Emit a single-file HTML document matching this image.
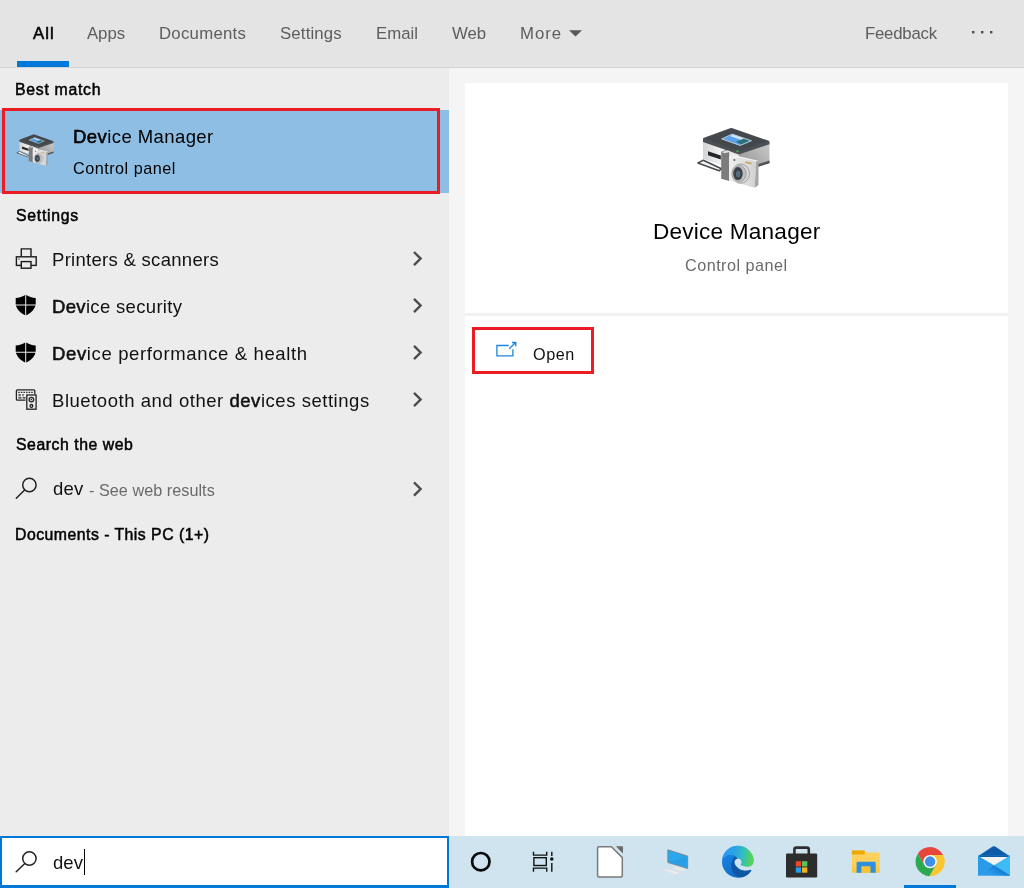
<!DOCTYPE html>
<html lang="en"><head><meta charset="utf-8"><title>Search</title><style>
*{margin:0;padding:0;box-sizing:border-box}
html,body{width:1024px;height:888px;overflow:hidden;background:#f5f5f5;font-family:"Liberation Sans",sans-serif}
.a{position:absolute}
.t{position:absolute;white-space:nowrap;line-height:1;will-change:transform}
.t b{font-weight:normal;-webkit-text-stroke:0.55px currentColor}
</style></head><body>
<div class="a" id="hdr" style="left:0;top:0;width:1024px;height:67px;background:#e4e4e4"></div>
<div class="a" style="left:0;top:67px;width:1024px;height:1px;background:#d4d4d4"></div>
<div class="a" id="left" style="left:0;top:68px;width:449px;height:768px;background:#ececec"></div>
<div class="a" id="card" style="left:465px;top:83px;width:543px;height:753px;background:#fff"></div>
<div class="a" style="left:465px;top:313px;width:543px;height:3px;background:#f1f1f1"></div>
<div class="a" style="left:17px;top:61px;width:52px;height:6px;background:#0078d7"></div>
<div class="a" style="left:0;top:110px;width:449px;height:83px;background:#8fbee5"></div>
<div class="a" style="left:2px;top:108px;width:438px;height:86px;border:3px solid #ec1c24"></div>
<div class="a" style="left:472px;top:327px;width:122px;height:47px;border:3px solid #ec1c24"></div>
<div class="a" style="left:0;top:836px;width:1024px;height:52px;background:#cfe4ef"></div>
<div class="a" style="left:0;top:836px;width:449px;height:52px;background:#fff;border:solid #0078d7;border-width:2px 2px 3px 2px"></div>
<div class="a" style="left:84px;top:849px;width:1px;height:26px;background:#000"></div>
<div class="a" style="left:904px;top:885px;width:52px;height:3px;background:#0078d7"></div>
<svg class="a" style="left:0;top:0" width="1024" height="888" viewBox="0 0 1024 888">
<defs>
<g id="devmgr">
  <!-- page coords, large version -->
  <polygon points="697.9,163 703.4,160.2 721.4,168.8 719,170.8" fill="#f4f4f4" stroke="#474c50" stroke-width="1.5" stroke-linejoin="round"/>
  <path d="M703,141 L738.8,153.5 L738.8,171 L703.6,159 a1,1 0 0 1 -0.6,-1 Z" fill="url(#dmL)"/>
  <path d="M738.8,153.5 L769.5,143.5 L769.5,163 L738.8,173 Z" fill="url(#dmR)"/>
  <path d="M738.8,170.4 L769.5,160.6 L769.5,163.2 L738.8,173 Z" fill="#4d5256"/>
  <path d="M704,137.8 L730,128.2 a3.5,3.5 0 0 1 2.6,0 L768.2,140.6 a1.6,1.6 0 0 1 1.3,1.6 V144.2 L738.8,154.6 L703,142 V139.4 a1.6,1.6 0 0 1 1,-1.6 Z" fill="#4b5055"/>
  <path d="M704.2,138.6 L731.3,128.8 L768.4,141.4 L738.8,151.2 Z" fill="#43484d"/>
  <polygon points="708,151.2 720.8,155.4 720.8,159.6 708,155.2" fill="#23272a"/>
  <polygon points="721.6,138.9 732.2,134.1 751.5,140.7 740.1,145.5" fill="#5aa0ea"/>
  <polygon points="730,136 733,134.8 746,139.2 742.6,140.6" fill="#cfe6fb"/>
  <polygon points="736,141.8 744,138.6 750,140.8 741,144.4" fill="#2f6f7a"/>
  <polygon points="721.6,138.9 732.2,134.1 751.5,140.7 740.1,145.5" fill="none" stroke="#dfe6ea" stroke-width="0.7"/>
  <circle cx="737.5" cy="151.3" r="1.1" fill="#35c24a"/>
  <path d="M721.2,152.6 a1.6,1.6 0 0 1 1.2,-1.5 L727.4,150 a1.6,1.6 0 0 1 1.8,1.4 V181 L721.2,178.8 Z" fill="#7c7c7c"/>
  <path d="M721.4,152 L727.6,150.4 L731,151.4 L725,153.2 Z" fill="#e0e0e0"/>
  <polygon points="729.1,156.5 756.3,161.3 754.6,187.7 729.1,180.6" fill="url(#dmC)"/>
  <polygon points="756.3,161.3 758.5,160.9 758.5,185 754.6,187.7" fill="#a6a6a6"/>
  <polygon points="729.1,156.5 732.2,154.8 758.5,160.7 756.3,161.5" fill="#f2f2f2"/>
  <ellipse cx="740.7" cy="173.6" rx="8.8" ry="9.7" fill="#d9d9d9" stroke="#9a9a9a" stroke-width="0.9"/>
  <ellipse cx="739.6" cy="173.6" rx="6.6" ry="8" fill="#bdbdbd" stroke="#8c8c8c" stroke-width="0.7"/>
  <ellipse cx="738" cy="173.6" rx="4.7" ry="6.5" fill="#3a4248"/>
  <ellipse cx="738.2" cy="174" rx="2.2" ry="3.2" fill="#54707f"/>
  <circle cx="734.4" cy="160" r="1" fill="#555"/>
  <polygon points="745.4,161.6 751.5,162.8 751.5,164.2 745.4,163" fill="#c2a24a"/>
</g>
<linearGradient id="dmL" x1="0" y1="0" x2="1" y2="0"><stop offset="0" stop-color="#d4d4d4"/><stop offset="0.5" stop-color="#f2f2f2"/><stop offset="1" stop-color="#e2e2e2"/></linearGradient>
<linearGradient id="dmR" x1="0" y1="1" x2="1" y2="0"><stop offset="0" stop-color="#8e8e8e"/><stop offset="1" stop-color="#c9c9c9"/></linearGradient>
<linearGradient id="dmC" x1="0" y1="0" x2="1" y2="0"><stop offset="0" stop-color="#efefef"/><stop offset="1" stop-color="#d2d2d2"/></linearGradient>
<g id="shield">
  <path d="M10,0 C7,2.1 3.5,3 0,3.2 L0,9.6 L9.5,9.6 L9.5,0.35 Z" />
  <path d="M10,0 C13,2.1 16.5,3 20,3.2 L20,9.6 L10.5,9.6 L10.5,0.35 Z" />
  <path d="M0.2,10.6 L9.5,10.6 L9.5,20.4 C5.2,18.4 1.4,15 0.2,10.6 Z"/>
  <path d="M19.8,10.6 L10.5,10.6 L10.5,20.4 C14.8,18.4 18.6,15 19.8,10.6 Z"/>
</g>
<g id="chev" fill="none" stroke="#4d4d4d" stroke-width="2.4" stroke-linecap="butt" stroke-linejoin="miter">
  <path d="M0.4,-6.6 L7,0 L0.4,6.6"/>
</g>
<linearGradient id="edgeg" x1="0" y1="1" x2="1" y2="0">
  <stop offset="0" stop-color="#0c59a4"/><stop offset="0.45" stop-color="#1b86d6"/><stop offset="0.75" stop-color="#35c1b0"/><stop offset="1" stop-color="#5fd15a"/>
</linearGradient>
<linearGradient id="edgeA" gradientUnits="userSpaceOnUse" x1="-16" y1="-4" x2="16" y2="0">
  <stop offset="0" stop-color="#2b98f2"/><stop offset="0.4" stop-color="#2aa6e2"/><stop offset="0.68" stop-color="#34c2b4"/><stop offset="0.84" stop-color="#4fcd6c"/><stop offset="1" stop-color="#60d45a"/>
</linearGradient>
<linearGradient id="edgeB" gradientUnits="userSpaceOnUse" x1="-8" y1="-10" x2="2" y2="16">
  <stop offset="0" stop-color="#1a82df"/><stop offset="1" stop-color="#0f6bc8"/>
</linearGradient>
<linearGradient id="expg" x1="0" y1="0" x2="0" y2="1"><stop offset="0" stop-color="#fdd25f"/><stop offset="0.6" stop-color="#fdd05a"/><stop offset="1" stop-color="#f7c53c"/></linearGradient>
<linearGradient id="mailb" gradientUnits="userSpaceOnUse" x1="1001" y1="869.6" x2="996" y2="877.6"><stop offset="0" stop-color="#1273cc" stop-opacity="0.85"/><stop offset="1" stop-color="#1c86da" stop-opacity="0"/></linearGradient>
<linearGradient id="mailg" x1="0" y1="0" x2="1" y2="0">
  <stop offset="0" stop-color="#1b8fdc"/><stop offset="1" stop-color="#3cc0f3"/>
</linearGradient>
</defs>

<!-- header: More arrow, dots -->
<polygon points="569,30.3 582,30.3 575.5,36.5" fill="#5a5a5a"/>
<rect x="972" y="31" width="2.4" height="2.4" fill="#4a4a4a"/><rect x="981" y="31" width="2.4" height="2.4" fill="#4a4a4a"/><rect x="990" y="31" width="2.4" height="2.4" fill="#4a4a4a"/>

<!-- device manager icons -->
<use href="#devmgr"/>
<use href="#devmgr" transform="translate(16.8,134.3) scale(0.513,0.527) translate(-697.9,-127.9)"/>

<!-- printer -->
<g fill="none" stroke="#1a1a1a" stroke-width="1.4">
  <path d="M21.3,256.5 V248.9 H31 V256.5"/>
  <rect x="16.4" y="256.8" width="19.8" height="8.6"/>
  <rect x="21.3" y="261.6" width="9.7" height="6.6" fill="#ececec"/>
</g>
<rect x="18.3" y="258.6" width="1.4" height="1" fill="#333"/>

<!-- shields -->
<use href="#shield" transform="translate(15.7,294.8)" fill="#000"/>
<use href="#shield" transform="translate(15.7,342.2)" fill="#000"/>

<!-- bluetooth devices -->
<g fill="none" stroke="#222" stroke-width="1.3">
  <path d="M25.5,400.2 H17.4 a1,1 0 0 1 -1,-1 V390.8 a1,1 0 0 1 1,-1 H33.8 a1,1 0 0 1 1,1 V394"/>
  <rect x="26.8" y="395" width="9.3" height="14.2"/>
  <circle cx="31.4" cy="399.6" r="2.3"/>
  <circle cx="31.4" cy="405.9" r="1.4"/>
</g>
<circle cx="31.4" cy="399.6" r="0.8" fill="#222"/>
<g stroke="#333" stroke-width="1.2" stroke-dasharray="1.6,1">
  <path d="M18.2,392.4 H33.5"/>
</g>
<rect x="18.4" y="394" width="2.4" height="2.2" fill="#666"/><rect x="22" y="394" width="2" height="2.2" fill="#888"/>
<path d="M18.4,397.8 H21.5 M22.6,397.8 H25.6" stroke="#222" stroke-width="1.2"/>

<!-- magnifiers -->
<g fill="none" stroke="#222" stroke-width="1.5" stroke-linecap="round">
  <circle cx="29.4" cy="485" r="6.7"/><path d="M24.6,490 L16.3,498.3"/>
  <circle cx="29.4" cy="858.5" r="6.7"/><path d="M24.6,863.8 L16.2,871.8"/>
</g>

<!-- chevrons -->
<use href="#chev" transform="translate(413.6,258.6)"/>
<use href="#chev" transform="translate(413.6,305.5)"/>
<use href="#chev" transform="translate(413.6,352.5)"/>
<use href="#chev" transform="translate(413.6,399.5)"/>
<use href="#chev" transform="translate(413.6,489)"/>

<!-- open icon -->
<g fill="none" stroke="#1a86e0" stroke-width="1.3">
  <path d="M508.7,345.5 H496.9 V355.8 H512.9 V349.2"/>
  <path d="M509.2,348.7 L515.6,342.5 M512,342.5 H515.8 V346.2"/>
</g>

<!-- cortana -->
<circle cx="480.8" cy="861.7" r="8.7" fill="none" stroke="#0a0a0a" stroke-width="2.7"/>

<!-- task view -->
<g fill="none" stroke="#111" stroke-width="1.4">
  <rect x="533.9" y="857.7" width="12.4" height="7.8"/>
  <path d="M533.5,851.8 V855.1 H546.7 V851.8"/>
  <path d="M533.5,871.8 V868.1 H546.7 V871.8"/>
  <path d="M551.8,851.8 V856 M551.8,863 V871.8"/>
</g>
<circle cx="551.8" cy="859.1" r="1.75" fill="#111"/>

<!-- libreoffice doc -->
<path d="M598.8,846.8 H611.4 L622.3,857.6 V875.7 a1.2,1.2 0 0 1 -1.2,1.2 H598.8 a1.2,1.2 0 0 1 -1.2,-1.2 V848 a1.2,1.2 0 0 1 1.2,-1.2 Z" fill="#fff" stroke="#7a7a7a" stroke-width="1.5" stroke-linejoin="round"/>
<path d="M615.8,846.2 H622.2 a0.8,0.8 0 0 1 0.8,0.8 V853.6 Z" fill="#6a6a6a"/>

<!-- computer -->
<polygon points="667.8,849.7 687.7,856.1 687.7,868.5 667.8,862.5" fill="#2ba6ec" stroke="#857f78" stroke-width="0.8" stroke-linejoin="round"/>
<polygon points="687.3,856.4 687.3,868 668.4,862.2" fill="#2a9de3" opacity="0.7"/>
<ellipse cx="679.5" cy="868.8" rx="6" ry="1.7" fill="#e4e8ea" transform="rotate(14 679.5 868.8)"/>
<polygon points="660.9,869.7 666.9,868 682.7,873.2 675.8,875.4" fill="#dcdfe1"/>
<polygon points="663.5,869.9 667,868.9 679.8,873.1 675.6,874.4" fill="#e9ebec"/>

<!-- edge -->
<g transform="translate(738,861.7)">
  <path d="M0,-16 A16,16 0 1 0 13.4,8.7 L12.9,8 C9.5,9.6 4.5,9.4 0.8,7 C-1.5,5.4 -3.6,3 -3.7,0.6 C-3.7,-1.4 -2.2,-3 -0.2,-3.1 Z" fill="url(#edgeB)"/>
  <path d="M-2.2,-6.6 C-5.6,-2.4 -7.4,1.6 -6.8,5.5 C-6.2,10 -3,13.8 0.8,15.3 C5.5,16.6 11,13 13.3,8.5 L12.9,8 C9.5,9.6 4.5,9.4 0.8,7 C-1.5,5.4 -3.6,3 -3.7,0.6 C-3.7,-1.4 -2.2,-3 -0.2,-3.1 L0.5,-6.5 Z" fill="#1058a6"/>
  <path d="M-15.9,-1.9 A16,16 0 0 1 15.9,-1.6 C16.2,2.6 13.2,5.4 10.2,5.1 C7.6,4.9 4.8,4.7 2.3,3.3 C4.2,1.5 4,-1.6 1.5,-2.8 C0.9,-3.1 0.3,-3.1 -0.2,-3.1 C-2.4,-6 -6,-7.9 -10,-6.7 C-13,-5.7 -15,-3.6 -15.9,-1.9 Z" fill="url(#edgeA)"/>
</g>

<!-- store -->
<path d="M794.4,854.5 V849.6 a2,2 0 0 1 2,-2 H806.8 a2,2 0 0 1 2,2 V854.5" fill="none" stroke="#2e2e2e" stroke-width="2.6"/>
<rect x="786" y="853.6" width="31.2" height="23.8" rx="1.2" fill="#2d2d2d"/>
<rect x="795.8" y="861.2" width="5.3" height="5.3" fill="#ea4a2a"/><rect x="802" y="861.2" width="5.3" height="5.3" fill="#5cc35c"/>
<rect x="795.8" y="867.4" width="5.3" height="5.3" fill="#2b9df0"/><rect x="802" y="867.4" width="5.3" height="5.3" fill="#f2b21a"/>

<!-- explorer -->
<path d="M851.9,853 V851.4 a1,1 0 0 1 1,-1 H864 a1,1 0 0 1 0.9,0.6 l0.6,1.5 H878.7 a1,1 0 0 1 1,1 V871.7 a1,1 0 0 1 -1,1 H852.9 a1,1 0 0 1 -1,-1 Z" fill="url(#expg)"/>
<path d="M851.9,854.6 V851.4 a1,1 0 0 1 1,-1 H863.8 a1,1 0 0 1 1,1 V853.6 a1,1 0 0 1 -1,1 Z" fill="#eba800"/>
<path d="M856.6,872.7 V863 a1.2,1.2 0 0 1 1.2,-1.2 H874.5 a1.2,1.2 0 0 1 1.2,1.2 V872.7 H870.3 V866.5 H861.6 V872.7 Z" fill="#2f8fdc"/>
<rect x="861.6" y="866.5" width="8.7" height="6.2" fill="#f6c233"/>

<!-- chrome -->
<g transform="translate(930.1,861.6) scale(0.972)">
  <path d="M-12.57,-8.18 A15,15 0 0 1 13.37,-6.8 L0,-6.8 L-5.89,3.4 Z" fill="#e8453c"/>
  <path d="M13.37,-6.8 A15,15 0 0 1 -0.8,14.98 L5.89,3.4 L0,-6.8 Z" fill="#fbc532"/>
  <path d="M-0.8,14.98 A15,15 0 0 1 -12.57,-8.18 L-5.89,3.4 L5.89,3.4 Z" fill="#2ca84f"/>
  <circle r="6.9" fill="#fff"/>
  <circle r="5.4" fill="#3f8fe8"/>
</g>

<!-- mail -->
<path d="M978,856.2 L992.6,846.6 a2.4,2.4 0 0 1 2.6,0 L1009.7,856.2 V858 H978 Z" fill="#0e5ca8"/>
<rect x="978" y="855.7" width="31.7" height="20" fill="#2a9be8"/>
<polygon points="994,865.2 1009.7,874.9 1009.7,875.7 980,875.7" fill="url(#mailb)"/>
<polygon points="1009.7,855.7 994,865.2 1009.7,874.9" fill="#3fbaf3"/>
<polygon points="980.8,856.2 1007,856.2 1007,857.4 994,865.2 980.8,857.4" fill="#f3f3f3"/>
<polygon points="978,855.7 1009.7,855.7 1007,857 980.8,857" fill="#0e5ca8"/>
</svg>

<div class="t" id="t_all" style="left:33.00px;top:26.08px;font-size:16.8px;color:#000;letter-spacing:0.989px;-webkit-text-stroke:0.55px currentColor">All</div>
<div class="t" id="t_apps" style="left:87.00px;top:26.08px;font-size:16.8px;color:#5d5d5d;letter-spacing:-0.074px;">Apps</div>
<div class="t" id="t_docs" style="left:159.10px;top:26.08px;font-size:16.8px;color:#5d5d5d;letter-spacing:0.245px;">Documents</div>
<div class="t" id="t_set" style="left:280.34px;top:26.08px;font-size:16.8px;color:#5d5d5d;letter-spacing:0.147px;">Settings</div>
<div class="t" id="t_email" style="left:376.10px;top:26.08px;font-size:16.8px;color:#5d5d5d;letter-spacing:0.012px;">Email</div>
<div class="t" id="t_web" style="left:452.00px;top:26.08px;font-size:16.8px;color:#5d5d5d;letter-spacing:-0.084px;">Web</div>
<div class="t" id="t_more" style="left:520.10px;top:26.08px;font-size:16.8px;color:#5d5d5d;letter-spacing:0.962px;">More</div>
<div class="t" id="t_fb" style="left:865.10px;top:26.08px;font-size:16.8px;color:#5d5d5d;letter-spacing:-0.233px;">Feedback</div>
<div class="t" id="h_best" style="left:15.10px;top:82.13px;font-size:15.8px;color:#000;letter-spacing:0.719px;-webkit-text-stroke:0.5px currentColor">Best match</div>
<div class="t" id="bm_title" style="left:72.72px;top:127.74px;font-size:18.5px;color:#000;letter-spacing:0.424px;"><b>Dev</b>ice Manager</div>
<div class="t" id="bm_sub" style="left:72.72px;top:160.09px;font-size:16.2px;color:#000;letter-spacing:0.496px;">Control panel</div>
<div class="t" id="h_set" style="left:16.00px;top:207.63px;font-size:15.8px;color:#000;letter-spacing:0.725px;-webkit-text-stroke:0.5px currentColor">Settings</div>
<div class="t" id="r1" style="left:51.98px;top:251.34px;font-size:18.5px;color:#111;letter-spacing:0.291px;">Printers &amp; scanners</div>
<div class="t" id="r2" style="left:51.98px;top:298.34px;font-size:18.5px;color:#111;letter-spacing:0.328px;"><b>Dev</b>ice security</div>
<div class="t" id="r3" style="left:51.98px;top:344.54px;font-size:18.5px;color:#111;letter-spacing:0.633px;"><b>Dev</b>ice performance &amp; health</div>
<div class="t" id="r4" style="left:51.98px;top:392.34px;font-size:18.5px;color:#111;letter-spacing:0.540px;">Bluetooth and other <b>dev</b>ices settings</div>
<div class="t" id="h_web" style="left:16.00px;top:437.33px;font-size:15.8px;color:#000;letter-spacing:0.541px;-webkit-text-stroke:0.5px currentColor">Search the web</div>
<div class="t" id="w_dev" style="left:52.88px;top:479.94px;font-size:18.5px;color:#111;letter-spacing:0.265px;">dev</div>
<div class="t" id="w_see" style="left:89.00px;top:481.89px;font-size:16.2px;color:#6a6a6a;letter-spacing:0.042px;">- See web results</div>
<div class="t" id="h_doc" style="left:15.10px;top:527.43px;font-size:15.8px;color:#000;letter-spacing:0.485px;-webkit-text-stroke:0.5px currentColor">Documents - This PC (1+)</div>
<div class="t" id="p_title" style="left:652.72px;top:221.17px;font-size:22.6px;color:#000;letter-spacing:0.208px;">Device Manager</div>
<div class="t" id="p_sub" style="left:685.48px;top:256.79px;font-size:16.2px;color:#6a6a6a;letter-spacing:0.478px;">Control panel</div>
<div class="t" id="p_open" style="left:533.00px;top:345.59px;font-size:16.2px;color:#111;letter-spacing:0.556px;">Open</div>
<div class="t" id="s_dev" style="left:52.62px;top:854.04px;font-size:18.5px;color:#111;letter-spacing:0.064px;">dev</div>
</body></html>
